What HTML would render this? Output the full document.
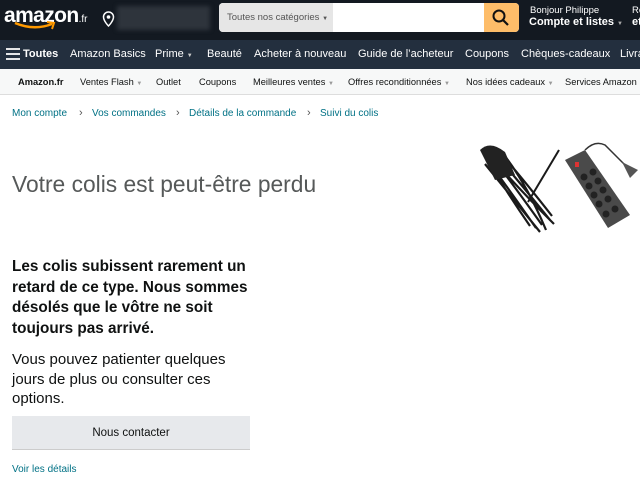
<!DOCTYPE html>
<html><head><meta charset="utf-8"><style>
*{margin:0;padding:0;box-sizing:border-box}
body{width:640px;height:480px;overflow:hidden;background:#fff;font-family:"Liberation Sans",sans-serif;position:relative}
.a{position:absolute;white-space:nowrap}
#top{position:absolute;left:0;top:0;width:640px;height:40px;background:#131921}
#nav{position:absolute;left:0;top:40px;width:640px;height:29px;background:#232f3e;color:#fff;font-size:11px}
#sub{position:absolute;left:0;top:69px;width:640px;height:26px;background:#f7f8f8;border-bottom:1px solid #ddd;font-size:9.3px;color:#0f1111}
.c{font-size:6px;color:#999}
.bc{position:absolute;top:108px;font-size:10px;color:#007185;white-space:nowrap}
.sep{position:absolute;top:107px;font-size:11px;color:#555}
</style></head><body>
<div id="top">
 <div class="a" style="left:4px;top:4px;color:#fff;font-size:21px;font-weight:bold;letter-spacing:-0.6px">amazon<span style="font-size:10px;font-weight:normal;letter-spacing:0">.fr</span></div>
 <svg class="a" style="left:14px;top:21px" width="42" height="9"><path d="M1 2 Q20 10 38 3" stroke="#f90" stroke-width="2.5" fill="none"/><path d="M33 1 L40 2 L38 8" stroke="#f90" stroke-width="2" fill="none"/></svg>
 <svg class="a" style="left:102px;top:11px" width="13" height="17"><path d="M6.5 1a5 5 0 0 1 5 5c0 4-5 9-5 9s-5-5-5-9a5 5 0 0 1 5-5z" stroke="#fff" stroke-width="1.5" fill="none"/><circle cx="6.5" cy="6" r="1.8" fill="#fff"/></svg>
 <div class="a" style="left:117px;top:6px;width:93px;height:24px;background:#2e343c;filter:blur(2px)"></div>
 <div class="a" style="left:219px;top:3px;width:300px;height:29px;background:#fff;border-radius:4px"></div>
 <div class="a" style="left:219px;top:3px;width:114px;height:29px;background:#e6e6e6;border-radius:4px 0 0 4px;font-size:9.5px;color:#555;padding:9px 0 0 8px">Toutes nos catégories <span style="font-size:6px">▼</span></div>
 <div class="a" style="left:484px;top:3px;width:35px;height:29px;background:#febd69;border-radius:0 4px 4px 0"></div>
 <svg class="a" style="left:491px;top:8px" width="20" height="20"><circle cx="8" cy="8" r="5.5" stroke="#111" stroke-width="2" fill="none"/><path d="M12 12l5 5" stroke="#111" stroke-width="2.2"/></svg>
 <div class="a" style="left:530px;top:5px;color:#fff;font-size:9.5px">Bonjour Philippe</div>
 <div class="a" style="left:529px;top:16px;color:#fff;font-size:11px;font-weight:bold">Compte et listes <span class="c" style="color:#aaa">▼</span></div>
 <div class="a" style="left:632px;top:5px;color:#fff;font-size:9.5px">Re</div>
 <div class="a" style="left:632px;top:16px;color:#fff;font-size:11px;font-weight:bold">et</div>
</div>
<div id="nav">
 <svg class="a" style="left:6px;top:8px" width="14" height="12"><path d="M0 1h14M0 6h14M0 11h14" stroke="#fff" stroke-width="1.8"/></svg>
 <div class="a" style="left:23px;top:8px;font-weight:bold">Toutes</div>
 <div class="a" style="left:70px;top:8px">Amazon Basics</div>
 <div class="a" style="left:155px;top:8px">Prime <span class="c" style="color:#ccc">▼</span></div>
 <div class="a" style="left:207px;top:8px">Beauté</div>
 <div class="a" style="left:254px;top:8px">Acheter à nouveau</div>
 <div class="a" style="left:358px;top:8px">Guide de l’acheteur</div>
 <div class="a" style="left:465px;top:8px">Coupons</div>
 <div class="a" style="left:521px;top:8px">Chèques-cadeaux</div>
 <div class="a" style="left:620px;top:8px">Livra</div>
</div>
<div id="sub">
 <div class="a" style="left:18px;top:8px;font-weight:bold">Amazon.fr</div>
 <div class="a" style="left:80px;top:8px">Ventes Flash <span class="c">▼</span></div>
 <div class="a" style="left:156px;top:8px">Outlet</div>
 <div class="a" style="left:199px;top:8px">Coupons</div>
 <div class="a" style="left:253px;top:8px">Meilleures ventes <span class="c">▼</span></div>
 <div class="a" style="left:348px;top:8px">Offres reconditionnées <span class="c">▼</span></div>
 <div class="a" style="left:466px;top:8px">Nos idées cadeaux <span class="c">▼</span></div>
 <div class="a" style="left:565px;top:8px">Services Amazon <span class="c">▼</span></div>
</div>
<div class="bc" style="left:12px">Mon compte</div><div class="sep" style="left:79px">›</div>
<div class="bc" style="left:92px">Vos commandes</div><div class="sep" style="left:176px">›</div>
<div class="bc" style="left:189px">Détails de la commande</div><div class="sep" style="left:307px">›</div>
<div class="bc" style="left:320px">Suivi du colis</div>
<div class="a" style="left:12px;top:171px;font-size:22.8px;color:#565959">Votre colis est peut-être perdu</div>
<svg class="a" style="left:480px;top:140px" width="160" height="100">
 <g stroke="#1a1a1a" stroke-width="2.2" fill="none">
 <path d="M8 12 Q30 40 62 85M12 10 Q36 38 70 80M6 18 Q28 48 56 88M16 8 Q40 35 72 76M5 24 Q30 55 60 92M20 10 Q45 40 66 90M10 16 Q38 48 74 84M4 14 Q25 50 50 86"/>
 <path d="M79 10 L48 62" stroke-width="2"/></g>
 <path d="M0 10 Q10 0 25 12 L35 35 L15 40Z" fill="#222"/>
 <path d="M85 20 L105 10 L150 75 L128 88Z" fill="#4a4a4a"/>
 <rect x="95" y="22" width="4" height="5" fill="#d33"/>
 <g fill="#222"><circle cx="104" cy="37" r="3.5"/><circle cx="113" cy="32" r="3.5"/><circle cx="109" cy="46" r="3.5"/><circle cx="118" cy="41" r="3.5"/><circle cx="114" cy="55" r="3.5"/><circle cx="123" cy="50" r="3.5"/><circle cx="119" cy="64" r="3.5"/><circle cx="128" cy="59" r="3.5"/><circle cx="126" cy="74" r="3.5"/><circle cx="135" cy="69" r="3.5"/></g>
 <path d="M105 10 Q115 0 125 5 L145 25" stroke="#333" stroke-width="1.5" fill="none"/><path d="M142 22 L158 30 L150 38Z" fill="#555"/>
</svg>
<div class="a" style="left:12px;top:257px;font-size:15.3px;font-weight:bold;color:#0f1111;line-height:20.5px">Les colis subissent rarement un<br>retard de ce type. Nous sommes<br>désolés que le vôtre ne soit<br>toujours pas arrivé.</div>
<div class="a" style="left:12px;top:350px;font-size:15px;color:#0f1111;line-height:19.5px">Vous pouvez patienter quelques<br>jours de plus ou consulter ces<br>options.</div>
<div class="a" style="left:12px;top:416px;width:238px;height:34px;background:#e7e9ec;border-bottom:1px solid #ccc;font-size:11.5px;color:#0f1111;text-align:center;line-height:34px">Nous contacter</div>
<div class="a" style="left:12px;top:464px;font-size:10px;color:#007185">Voir les détails</div>
</body></html>
